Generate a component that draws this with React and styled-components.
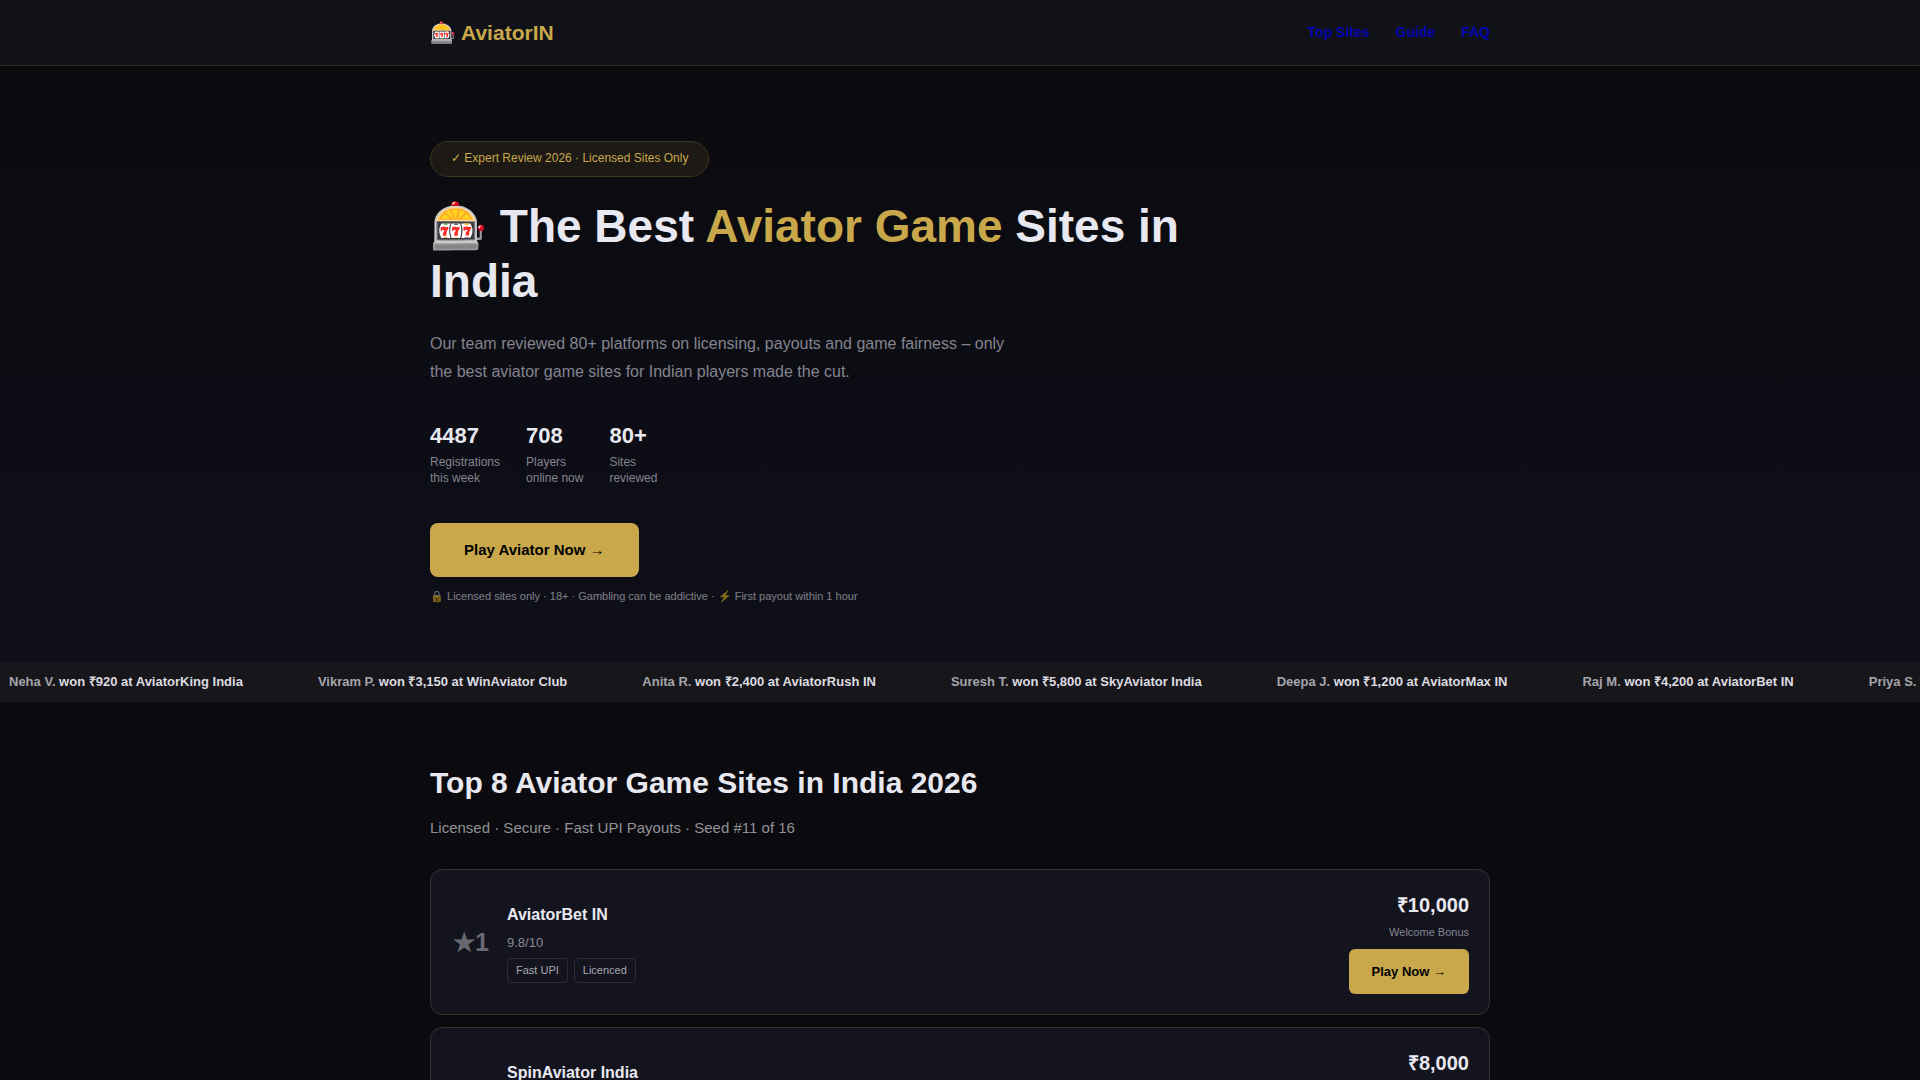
import styled, { createGlobalStyle } from 'styled-components'

const wins = [
  { name: "Neha V.", amount: "₹920", site: "AviatorKing India" },
  { name: "Vikram P.", amount: "₹3,150", site: "WinAviator Club" },
  { name: "Anita R.", amount: "₹2,400", site: "AviatorRush IN" },
  { name: "Suresh T.", amount: "₹5,800", site: "SkyAviator India" },
  { name: "Deepa J.", amount: "₹1,200", site: "AviatorMax IN" },
  { name: "Raj M.", amount: "₹4,200", site: "AviatorBet IN" },
  { name: "Priya S.", amount: "₹8,000", site: "SpinAviator India" },
];

const stats = [
  { value: "4487", lines: ["Registrations", "this week"] },
  { value: "708", lines: ["Players", "online now"] },
  { value: "80+", lines: ["Sites", "reviewed"] },
];

const sites = [
  { name: "AviatorBet IN", score: "9.8/10", tags: ["Fast UPI", "Licenced"], bonus: "₹10,000" },
  { name: "SpinAviator India", score: "9.6/10", tags: ["Fast UPI", "Licenced"], bonus: "₹8,000" },
];

const GlobalStyle = createGlobalStyle`
  * {
    box-sizing: border-box;
    margin: 0;
    padding: 0;
  }

  body {
    background: #0a0a0f;
    color: #e8e8f0;
    font-family: "Liberation Sans", Arial, sans-serif;
    font-size: 16px;
    line-height: 1.6;
    overflow-x: hidden;
  }

  a {
    text-decoration: none;
  }
`;

const Container = styled.div`
  max-width: 1100px;
  margin: 0 auto;
  padding: 0 20px;
`;

const Header = styled.header`
  background: #111217;
  border-bottom: 1px solid #352e20;
  padding: 16px 0;
`;

const HeaderRow = styled(Container)`
  display: flex;
  align-items: center;
  justify-content: space-between;
`;

const Logo = styled.div`
  color: #c8a84b;
  font-size: 21px;
  font-weight: 700;
  line-height: 33px;
`;

const Nav = styled.nav`
  display: flex;
  gap: 26px;
`;

const NavLink = styled.a`
  color: #0000ee;
  font-size: 14px;
  font-weight: 600;
  line-height: 33px;
  opacity: 0.7;
`;

const Hero = styled.section`
  background: linear-gradient(180deg, #0a0a0f 0%, #0c0d12 40%, #0d0d16 60%, #0f0f19 100%);
  padding: 75px 0 57px;
`;

const Badge = styled.div`
  display: inline-block;
  background: #1d1914;
  border: 1px solid #3e3520;
  border-radius: 20px;
  color: #c8a84b;
  font-size: 12px;
  line-height: 20px;
  padding: 6px 20px 8px;
`;

const Title = styled.h1`
  max-width: 780px;
  margin-top: 22px;
  font-size: 46px;
  font-weight: 700;
  line-height: 55px;
`;

const Accent = styled.span`
  color: #c8a84b;
`;

const Lead = styled.p`
  max-width: 600px;
  margin-top: 21px;
  color: #84848f;
  font-size: 16px;
  line-height: 28px;
`;

const Stats = styled.div`
  display: flex;
  gap: 26px;
  margin: 32px 0 37px;
`;

const StatValue = styled.div`
  font-size: 22px;
  font-weight: 700;
  line-height: 36px;
`;

const StatLabel = styled.div`
  color: #84848f;
  font-size: 12px;
  line-height: 16px;
`;

const PlayLink = styled.a`
  display: inline-block;
  background: #c8a84b;
  border-radius: ${(props) => (props.$large ? "8px" : "6px")};
  color: #000000;
  font-size: ${(props) => (props.$large ? "15px" : "13px")};
  font-weight: 700;
  line-height: ${(props) => (props.$large ? "22px" : "21px")};
  padding: ${(props) => (props.$large ? "16px 34px" : "12px 23px")};
`;

const Note = styled.p`
  margin-top: 10px;
  font-size: 11px;
  line-height: 18px;
  opacity: 0.5;
`;

const Ticker = styled.div`
  display: flex;
  gap: 75px;
  overflow: hidden;
  background: #17161a;
  color: #dcdce1;
  padding: 9px;
  font-size: 13px;
  font-weight: 600;
  line-height: 22px;
  white-space: nowrap;
`;

const Winner = styled.span`
  color: #a5a5ab;
`;

const Listing = styled.section`
  padding: 58px 0;
`;

const SectionTitle = styled.h2`
  font-size: 30px;
  font-weight: 700;
  line-height: 46px;
`;

const SectionText = styled.p`
  margin: 10px 0 30px;
  color: #929296;
  font-size: 15px;
  line-height: 23px;
`;

const SiteList = styled.div`
  display: flex;
  flex-direction: column;
  gap: 12px;
`;

const SiteCard = styled.article`
  display: flex;
  align-items: center;
  gap: 16px;
  background: #14141f;
  border: 1px solid #36312b;
  border-radius: 12px;
  padding: 20px;
`;

const Rank = styled.div`
  width: 40px;
  color: #696972;
  font-size: 25px;
  font-weight: 700;
  text-align: center;
  white-space: nowrap;
`;

const SiteInfo = styled.div`
  flex: 1;
`;

const SiteName = styled.h3`
  font-size: 16px;
  font-weight: 700;
  line-height: 26px;
`;

const Score = styled.div`
  margin: 4px 0 5px;
  color: #8a8a94;
  font-size: 13px;
  line-height: 21px;
`;

const Tags = styled.div`
  display: flex;
  gap: 6px;
`;

const Tag = styled.span`
  border: 1px solid #2d2d38;
  border-radius: 4px;
  color: #a8a8b2;
  font-size: 11px;
  line-height: 17px;
  padding: 3px 8px;
`;

const Offer = styled.div`
  text-align: right;
`;

const Bonus = styled.div`
  font-size: 20px;
  font-weight: 700;
  line-height: 31px;
`;

const BonusLabel = styled.div`
  margin: 2px 0 8px;
  color: #84848f;
  font-size: 11px;
  line-height: 18px;
`;

function SiteRow({ site, rank }) {
  return (
    <SiteCard>
      <Rank>★{rank}</Rank>
      <SiteInfo>
        <SiteName>{site.name}</SiteName>
        <Score>{site.score}</Score>
        <Tags>
          {site.tags.map((tag) => (
            <Tag key={tag}>{tag}</Tag>
          ))}
        </Tags>
      </SiteInfo>
      <Offer>
        <Bonus>{site.bonus}</Bonus>
        <BonusLabel>Welcome Bonus</BonusLabel>
        <PlayLink href="#play">Play Now →</PlayLink>
      </Offer>
    </SiteCard>
  );
}

function App() {
  return (
    <>
      <GlobalStyle />
      <Header>
        <HeaderRow>
          <Logo>🎰 AviatorIN</Logo>
          <Nav>
            <NavLink href="#sites">Top Sites</NavLink>
            <NavLink href="#guide">Guide</NavLink>
            <NavLink href="#faq">FAQ</NavLink>
          </Nav>
        </HeaderRow>
      </Header>
      <main>
        <Hero>
          <Container>
            <Badge>✓ Expert Review 2026 · Licensed Sites Only</Badge>
            <Title>
              🎰 The Best <Accent>Aviator Game</Accent> Sites in India
            </Title>
            <Lead>
              Our team reviewed 80+ platforms on licensing, payouts and game fairness – only the
              best aviator game sites for Indian players made the cut.
            </Lead>
            <Stats>
              {stats.map((stat) => (
                <div key={stat.value}>
                  <StatValue>{stat.value}</StatValue>
                  {stat.lines.map((line) => (
                    <StatLabel key={line}>{line}</StatLabel>
                  ))}
                </div>
              ))}
            </Stats>
            <PlayLink $large href="#sites">Play Aviator Now →</PlayLink>
            <Note>
              🔒 Licensed sites only · 18+ · Gambling can be addictive · ⚡ First payout within 1 hour
            </Note>
          </Container>
        </Hero>
        <Ticker>
          {wins.map((win) => (
            <span key={win.name}>
              <Winner>{win.name}</Winner> won {win.amount} at {win.site}
            </span>
          ))}
        </Ticker>
        <Listing id="sites">
          <Container>
            <SectionTitle>Top 8 Aviator Game Sites in India 2026</SectionTitle>
            <SectionText>Licensed · Secure · Fast UPI Payouts · Seed #11 of 16</SectionText>
            <SiteList>
              {sites.map((site, index) => (
                <SiteRow key={site.name} site={site} rank={index + 1} />
              ))}
            </SiteList>
          </Container>
        </Listing>
      </main>
    </>
  );
}

export default App;
